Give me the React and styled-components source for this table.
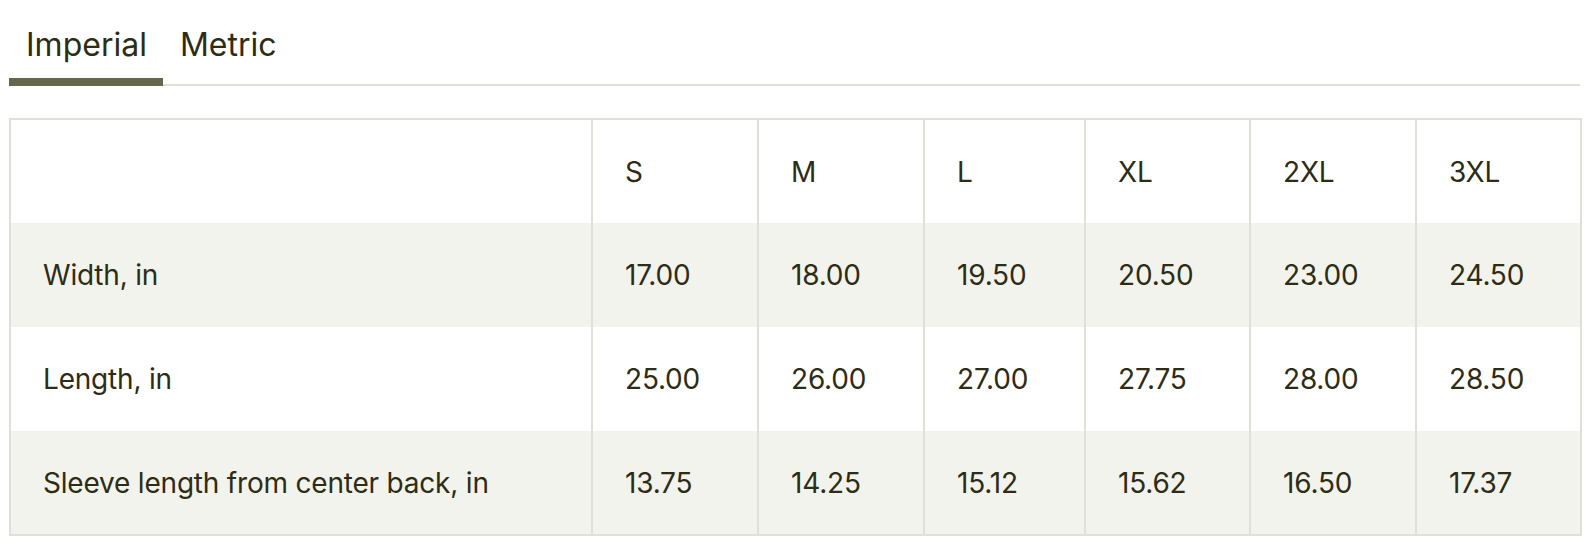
import React, { useState } from 'react'
import styled, { createGlobalStyle } from 'styled-components'

const GlobalStyle = createGlobalStyle`
  body {
    margin: 0;
    background: #fff;
    font-family: Inter, "Liberation Sans", sans-serif;
    color: #2d2c14;
  }
`

const Page = styled.div`
  padding: 0 8px 0 9px;
`

const TabBar = styled.div`
  display: flex;
  height: 86px;
  border-bottom: 2px solid #e0e0d8;
  box-sizing: border-box;
`

const Tab = styled.button`
  appearance: none;
  background: none;
  border: 0;
  margin: 0 0 -2px;
  padding: 29px 16px 0 17px;
  font-family: inherit;
  font-size: 32px;
  line-height: 1;
  color: #2d2c14;
  cursor: pointer;
  display: flex;
  align-items: flex-start;
  border-bottom: 8px solid ${(p) => (p.$active ? '#67654b' : 'transparent')};
`

const Table = styled.table`
  margin-top: 32px;
  width: 1571px;
  table-layout: fixed;
  border-collapse: collapse;
  border: 2px solid #e0e0d8;
  font-size: 28px;
  letter-spacing: -0.2px;
`

const Row = styled.tr`
  height: 104px;
  background: ${(p) => (p.$shaded ? '#f3f3ee' : '#fff')};
`

const Cell = styled.td`
  padding: 0 32px;
  vertical-align: middle;
  text-align: left;
  font-weight: 400;
  white-space: nowrap;
  border-left: 2px solid #e0e0d8;
  &:first-child {
    border-left: 0;
  }
`

const widths = [582, 166, 166, 161, 165, 166, 165]
const sizes = ['S', 'M', 'L', 'XL', '2XL', '3XL']

const data = {
  imperial: [
    ['Width, in', '17.00', '18.00', '19.50', '20.50', '23.00', '24.50'],
    ['Length, in', '25.00', '26.00', '27.00', '27.75', '28.00', '28.50'],
    ['Sleeve length from center back, in', '13.75', '14.25', '15.12', '15.62', '16.50', '17.37'],
  ],
  metric: [
    ['Width, cm', '43.2', '45.7', '49.5', '52.1', '58.4', '62.2'],
    ['Length, cm', '63.5', '66.0', '68.6', '70.5', '71.1', '72.4'],
    ['Sleeve length from center back, cm', '34.9', '36.2', '38.4', '39.7', '41.9', '44.1'],
  ],
}

export default function App() {
  const [unit, setUnit] = useState('imperial')

  return (
    <Page>
      <GlobalStyle />
      <TabBar>
        <Tab $active={unit === 'imperial'} onClick={() => setUnit('imperial')}>Imperial</Tab>
        <Tab $active={unit === 'metric'} onClick={() => setUnit('metric')}>Metric</Tab>
      </TabBar>
      <Table>
        <colgroup>
          {widths.map((w, i) => <col key={i} style={{ width: w }} />)}
        </colgroup>
        <thead>
          <Row>
            <Cell as="th" />
            {sizes.map((s) => <Cell as="th" key={s}>{s}</Cell>)}
          </Row>
        </thead>
        <tbody>
          {data[unit].map((row, i) => (
            <Row key={row[0]} $shaded={i % 2 === 0}>
              {row.map((v, j) => <Cell key={j}>{v}</Cell>)}
            </Row>
          ))}
        </tbody>
      </Table>
    </Page>
  )
}
